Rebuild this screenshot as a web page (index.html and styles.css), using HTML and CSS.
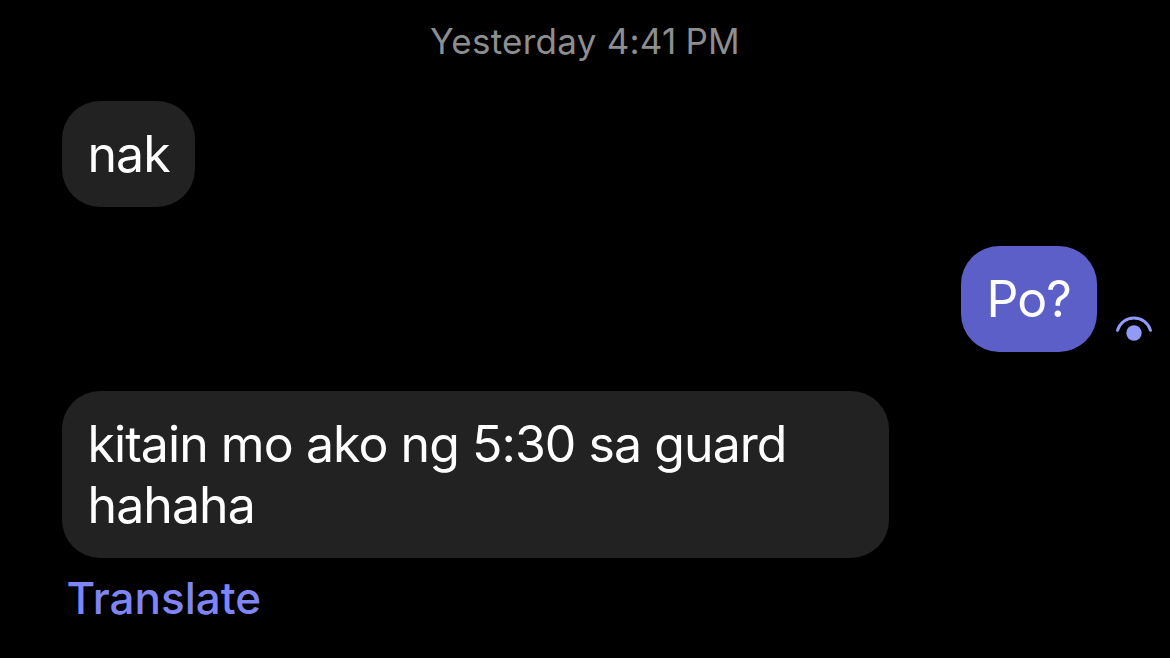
FILE: index.html
```html
<!DOCTYPE html>
<html lang="tl">
<head>
    <meta charset="UTF-8">
    <meta name="viewport" content="width=device-width, initial-scale=1.0">
    <title>Chat</title>
    <link rel="stylesheet" href="styles.css">
</head>
<body>
    <div class="chat">
        <div class="timestamp">Yesterday 4:41<span class="period">PM</span></div>
        <div class="row">
            <div class="bubble received short">nak</div>
        </div>
        <div class="row row-sent">
            <div class="bubble sent">Po?</div>
            <svg class="seen" width="38" height="26" viewBox="0 0 38 26">
                <path d="M2.5 14.3A17.2 17.2 0 0 1 35.5 14.3" fill="none" stroke="#9299f7" stroke-width="3" stroke-linecap="round"/>
                <circle cx="19" cy="17" r="7.7" fill="#9299f7"/>
            </svg>
        </div>
        <div class="row">
            <div class="bubble received long">kitain mo ako ng 5:30 sa guard<br>hahaha</div>
        </div>
        <a class="translate">Translate</a>
    </div>
</body>
</html>
```
FILE: styles.css
```css
* {
    box-sizing: border-box;
}
body {
    margin: 0;
    background-color: #000;
    font-family: Inter, sans-serif;
    color: #fff;
}
.chat {
    height: 658px;
    padding: 20px 17px 0 61.5px;
    display: flex;
    flex-direction: column;
    overflow: hidden;
}
.timestamp {
    height: 44px;
    margin-left: -61.5px;
    margin-right: -17px;
    margin-bottom: 36.5px;
    line-height: 43px;
    font-size: 35px;
    letter-spacing: 0.25px;
    text-align: center;
    color: #8e8e8e;
    white-space: nowrap;
}
.period {
    margin-left: 9px;
}
.row {
    display: flex;
    margin-bottom: 39px;
}
.row-sent {
    justify-content: flex-end;
    align-items: flex-end;
    gap: 18.5px;
}
.bubble {
    height: 106px;
    padding: 23px 25px 21px 26px;
    border-radius: 38px;
    font-size: 50px;
    line-height: 61px;
    letter-spacing: -0.94px;
    white-space: nowrap;
}
.received {
    background-color: #222;
}
.short {
    width: 133px;
}
.sent {
    width: 136px;
    background-color: #5b5fc7;
}
.long {
    width: 827.5px;
    height: 167px;
}
.seen {
    margin-bottom: 9.5px;
}
.row:last-of-type {
    margin-bottom: 13.5px;
}
.translate {
    margin-left: 5px;
    font-size: 44px;
    font-weight: 500;
    line-height: 54px;
    color: #7f85f5;
}
```
